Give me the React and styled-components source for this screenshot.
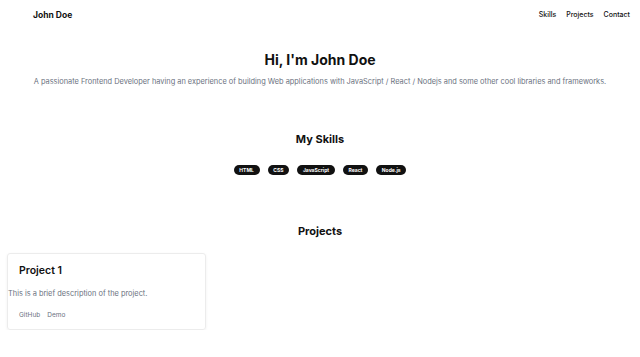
import React from "react";
import styled, { createGlobalStyle } from "styled-components";

const Global = createGlobalStyle`
  html, body { margin: 0; padding: 0; background: #fff; }
  body { font-family: Inter, "Noto Sans", sans-serif; color: #111; }
  * { box-sizing: border-box; }
`;

const Nav = styled.nav`
  display: flex;
  align-items: center;
  justify-content: space-between;
  height: 29px;
  padding: 0 10px 0 33px;
`;

const Brand = styled.div`
  font-size: 8.5px;
  font-weight: 700;
`;

const Links = styled.div`
  display: flex;
  gap: 10px;
`;

const NavLink = styled.a`
  font-size: 7px;
  font-weight: 500;
  color: #111;
  text-decoration: none;
`;

const Hero = styled.section`
  display: flex;
  flex-direction: column;
  align-items: center;
  padding-top: 22px;
`;

const Title = styled.h1`
  margin: 0;
  font-size: 14px;
  font-weight: 700;
  line-height: 18px;
`;

const Subtitle = styled.p`
  margin: 8px 0 0;
  font-size: 7.4px;
  color: #6b7280;
  line-height: 10px;
`;

const Section = styled.section`
  display: flex;
  flex-direction: column;
  align-items: ${(p) => (p.$left ? "flex-start" : "center")};
  padding: 0 7px;
  margin-top: ${(p) => p.$mt}px;
`;

const SectionTitle = styled.h2`
  align-self: center;
  margin: 0;
  font-size: 11px;
  font-weight: 700;
  line-height: 16px;
`;

const Pills = styled.div`
  display: flex;
  gap: 8px;
  margin-top: 18px;
`;

const Pill = styled.span`
  background: #111;
  color: #fff;
  font-size: 5px;
  font-weight: 700;
  padding: 0 5.7px;
  height: 10px;
  line-height: 10px;
  border-radius: 5px;
`;

const Card = styled.div`
  margin-top: 14px;
  width: 199px;
  height: 77px;
  border: 1px solid #ececec;
  border-radius: 3px;
  box-shadow: 0 1px 3px rgba(0,0,0,0.06);
  display: flex;
  flex-direction: column;
`;

const CardTitle = styled.h3`
  margin: 10px 0 0 11px;
  font-size: 10.5px;
  font-weight: 600;
  line-height: 14px;
`;

const CardText = styled.p`
  margin: 11px 0 0 0;
  font-size: 7.4px;
  color: #6b7280;
  line-height: 10px;
`;

const CardLinks = styled.div`
  display: flex;
  gap: 7px;
  margin: 11px 0 0 11px;
`;

const CardLink = styled.a`
  font-size: 6.5px;
  line-height: 10px;
  color: #6b7280;
  text-decoration: none;
`;

const skills = ["HTML", "CSS", "JavaScript", "React", "Node.js"];

export default function App() {
  return (
    <>
      <Global />
      <Nav>
        <Brand>John Doe</Brand>
        <Links>
          <NavLink>Skills</NavLink>
          <NavLink>Projects</NavLink>
          <NavLink>Contact</NavLink>
        </Links>
      </Nav>
      <Hero>
        <Title>Hi, I'm John Doe</Title>
        <Subtitle>
          A passionate Frontend Developer having an experience of building Web applications with JavaScript / React / Nodejs and some other cool libraries and frameworks.
        </Subtitle>
      </Hero>
      <Section $mt={44}>
        <SectionTitle>My Skills</SectionTitle>
        <Pills>
          {skills.map((s) => (
            <Pill key={s}>{s}</Pill>
          ))}
        </Pills>
      </Section>
      <Section $mt={48} $left>
        <SectionTitle>Projects</SectionTitle>
        <Card>
          <CardTitle>Project 1</CardTitle>
          <CardText>This is a brief description of the project.</CardText>
          <CardLinks>
            <CardLink>GitHub</CardLink>
            <CardLink>Demo</CardLink>
          </CardLinks>
        </Card>
      </Section>
    </>
  );
}
